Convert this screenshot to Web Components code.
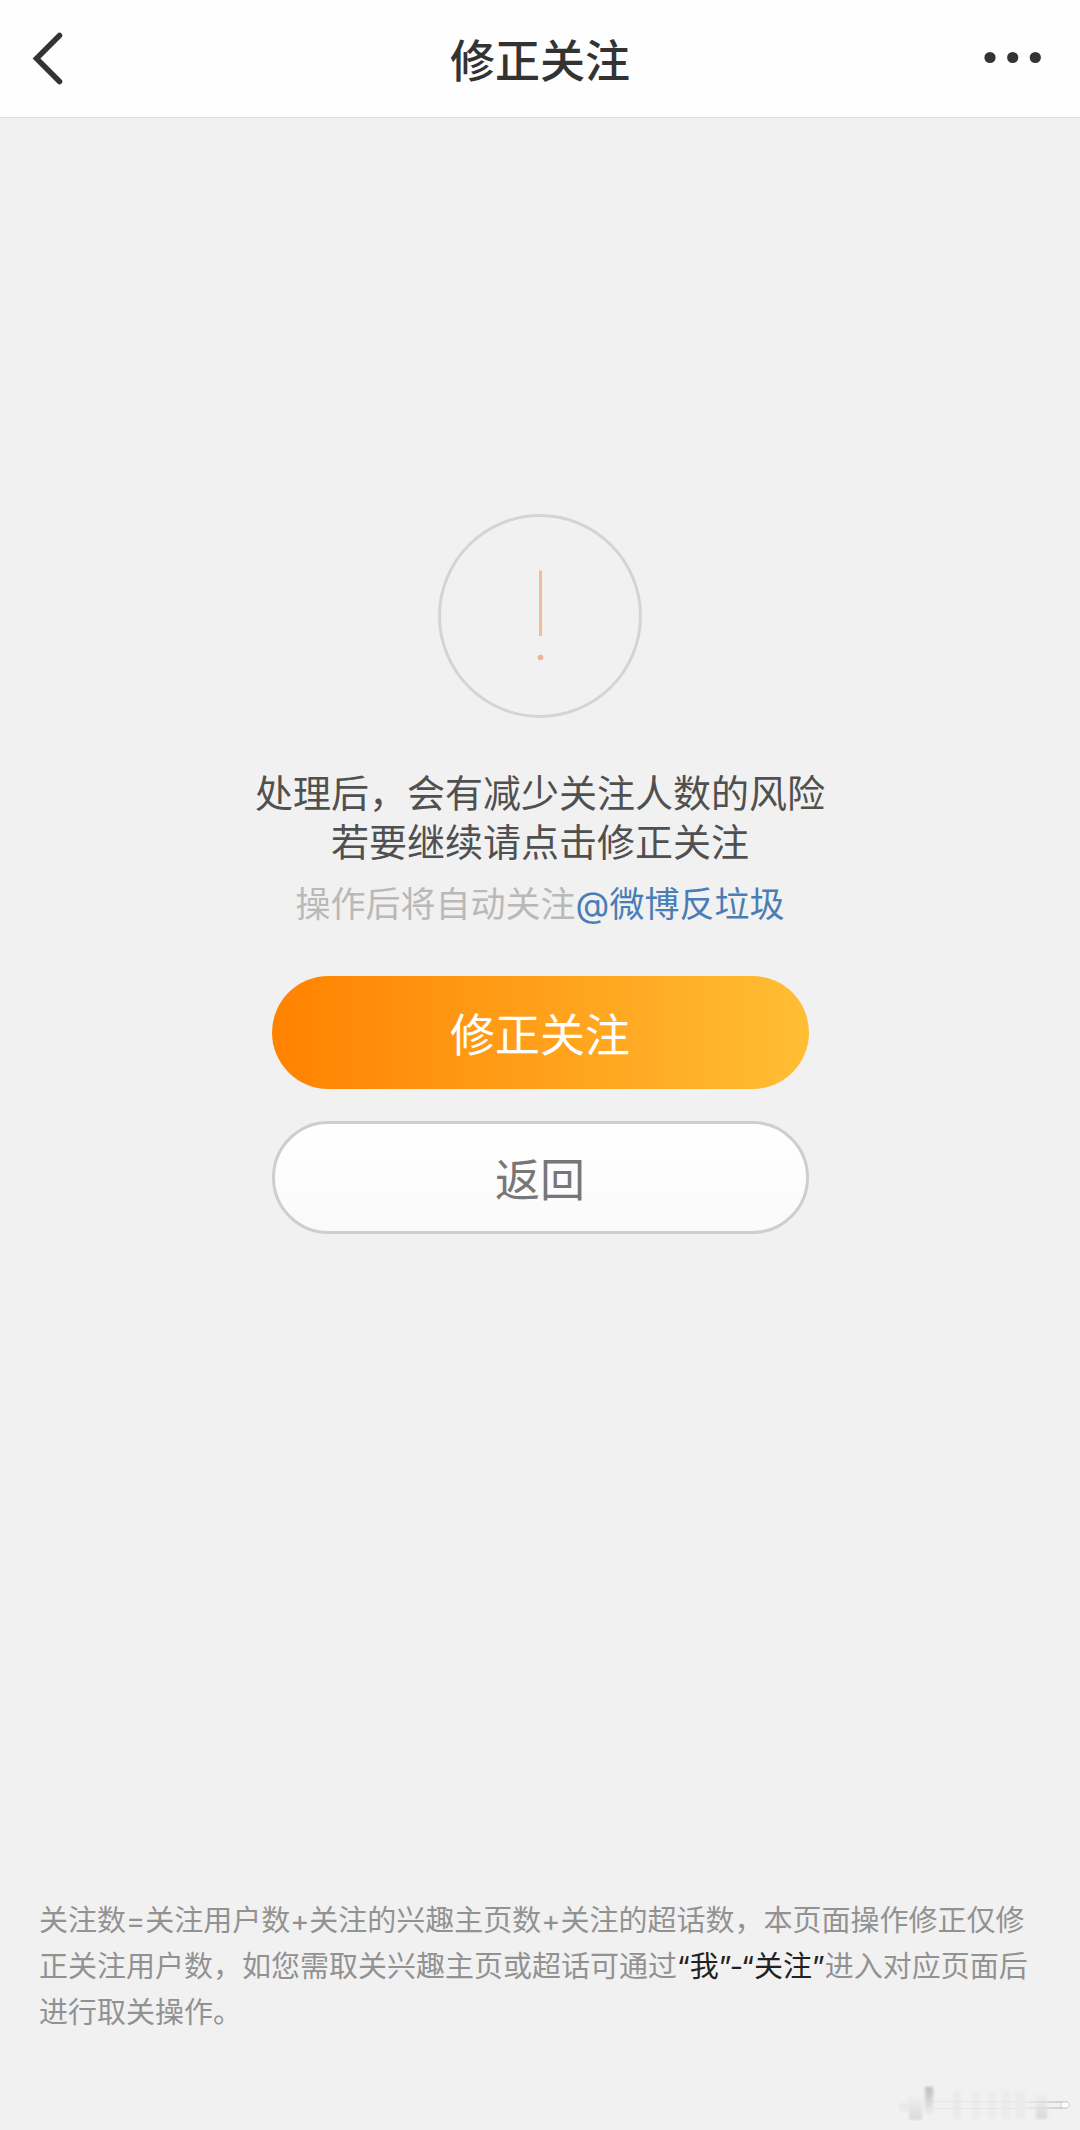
<!DOCTYPE html>
<html lang="zh-CN">
<head>
<meta charset="utf-8">
<meta name="viewport" content="width=device-width, initial-scale=1">
<title>修正关注</title>
<style>
  body {
    margin: 0;
    background: #f1f1f1;
    font-family: "Noto Sans CJK SC", sans-serif;
  }
</style>
</head>
<body>
<fix-page>
  <nav-bar slot="header">修正关注</nav-bar>
  <status-notice>
    处理后，会有减少关注人数的风险<br>若要继续请点击修正关注
    <span slot="hint">操作后将自动关注<user-link>@微博反垃圾</user-link></span>
  </status-notice>
  <pill-button kind="primary">修正关注</pill-button>
  <pill-button>返回</pill-button>
  <foot-note slot="footer">关注数=关注用户数+关注的兴趣主页数+关注的超话数，本页面操作修正仅修正关注用户数，如您需取关兴趣主页或超话可通过<b>“我”-“关注”</b>进入对应页面后进行取关操作。</foot-note>
  <faded-mark slot="footer"></faded-mark>
</fix-page>

<script>
  const define = (name, html) => customElements.define(name, class extends HTMLElement {
    constructor() {
      super();
      this.attachShadow({ mode: 'open' }).innerHTML = html;
    }
  });

  define('fix-page', `
    <style>
      :host { display: flex; flex-direction: column; min-height: 100vh; }
      main { flex: 1; display: flex; flex-direction: column; align-items: center; gap: 32px; padding: 396px 24px 48px; }
      footer { display: flex; flex-direction: column; gap: 49px; padding: 0 9px 9px 39px; }
    </style>
    <slot name="header"></slot>
    <main><slot></slot></main>
    <footer><slot name="footer"></slot></footer>`);

  define('nav-bar', `
    <style>
      :host { display: block; background: #fefefe; border-bottom: 1px solid #dedede; color: #333; }
      header { display: grid; grid-template-columns: 1fr auto 1fr; align-items: center; height: 117px; }
      h1 { margin: 0; font-size: 45px; line-height: 64px; font-weight: 500; }
      button { display: flex; padding: 0; border: 0; background: none; color: inherit; }
      .more { justify-self: end; }
      svg { display: block; }
    </style>
    <header>
      <button type="button" aria-label="返回上一页">
        <svg width="96" height="117" viewBox="0 0 96 117" fill="none" stroke="currentColor" stroke-width="5.500">
          <path d="M59.500 35.500 36.500 58.500 59.500 81.500" stroke-linecap="round"/>
        </svg>
      </button>
      <h1><slot></slot></h1>
      <button type="button" class="more" aria-label="更多">
        <svg width="120" height="117" viewBox="0 0 120 117" fill="currentColor">
          <circle cx="30" cy="57.500" r="5.600"/><circle cx="52.700" cy="57.500" r="5.600"/><circle cx="75.300" cy="57.500" r="5.600"/>
        </svg>
      </button>
    </header>`);

  define('status-notice', `
    <style>
      :host { display: flex; flex-direction: column; align-items: center; text-align: center; margin-bottom: 16px; }
      svg { display: block; margin-bottom: 48px; }
      p { margin: 0; }
      .lead { font-size: 38px; line-height: 49px; color: #505050; }
      .hint { margin-top: 14px; font-size: 35px; line-height: 48px; color: #b9b9b9; }
    </style>
    <svg width="204" height="204" viewBox="0 0 204 204" fill="none" aria-hidden="true">
      <circle cx="102" cy="102" r="100.500" stroke="#d4d4d4" stroke-width="3"/>
      <path d="M102.500 56.500V122" stroke="#efbd9a" stroke-width="3"/>
      <circle cx="102.500" cy="143.500" r="2.800" fill="#ecb49a"/>
    </svg>
    <p class="lead"><slot></slot></p>
    <p class="hint"><slot name="hint"></slot></p>`);

  define('user-link', `
    <style>
      :host { display: inline-block; font-family: Inter, "Noto Sans CJK SC", sans-serif; }
      a { color: #4b7db5; text-decoration: none; }
    </style>
    <a href="#"><slot></slot></a>`);

  define('pill-button', `
    <style>
      :host { display: block; width: 537px; max-width: 100%; }
      button {
        display: block; box-sizing: border-box; width: 100%; height: 113px; padding: 0;
        border: 3px solid #cecece; border-radius: 57px;
        background: linear-gradient(#fff, #fafafa);
        font-family: inherit; font-size: 45px; line-height: 64px; color: #777;
      }
      :host([kind="primary"]) button { border: 0; background: linear-gradient(90deg, #ff8200, #ffbe34); color: #fff; }
    </style>
    <button type="button"><slot></slot></button>`);

  define('foot-note', `
    <style>
      :host { display: block; padding-right: 30px; font-family: Inter, "Noto Sans CJK SC", sans-serif; font-size: 29px; line-height: 46px; color: #929292; }
      p { margin: 0; }
      ::slotted(b) { font-weight: 400; color: #222; }
    </style>
    <p><slot></slot></p>`);

  define('faded-mark', `
    <style>
      :host { display: block; align-self: flex-end; }
      svg { display: block; }
    </style>
    <svg width="172" height="36" viewBox="0 0 172 36" aria-hidden="true">
      <defs>
        <linearGradient id="down" x2="0" y2="1"><stop stop-color="#bcbcbc"/><stop offset="1" stop-color="#ececec"/></linearGradient>
        <linearGradient id="up" x2="0" y2="1"><stop stop-color="#f0f0f0"/><stop offset="1" stop-color="#d9d9d9"/></linearGradient>
        <linearGradient id="across"><stop stop-color="#eeeeee"/><stop offset="1" stop-color="#cccccc"/></linearGradient>
        <filter id="soft" x="-20%" y="-20%" width="140%" height="140%"><feGaussianBlur stdDeviation="1.500"/></filter>
      </defs>
      <g filter="url(#soft)">
        <path d="M0 18h10v8H0z" fill="#e9e9e9"/>
        <path d="M10 10h13v25H10z" fill="url(#up)"/>
        <path d="M26 2h8v27h-8z" fill="url(#down)"/>
        <path d="M54 6h8v28h-8zM74 6h7v28h-7zM89 6h8v28h-8zM103 6h8v28h-8zM116 6h10v28h-10z" fill="#ebebeb"/>
        <path d="M137 8h11v26h-11z" fill="url(#up)"/>
      </g>
      <path d="M34 16.500h130M34 23.500h130" stroke="#e6e6e6" stroke-width="1"/>
      <path d="M120 16h48v2h-48zM120 22h48v2h-48z" fill="url(#across)"/>
      <rect x="162" y="17" width="8" height="6" rx="2" fill="#fff" stroke="#cfcfcf"/>
    </svg>`);
</script>
</body>
</html>
